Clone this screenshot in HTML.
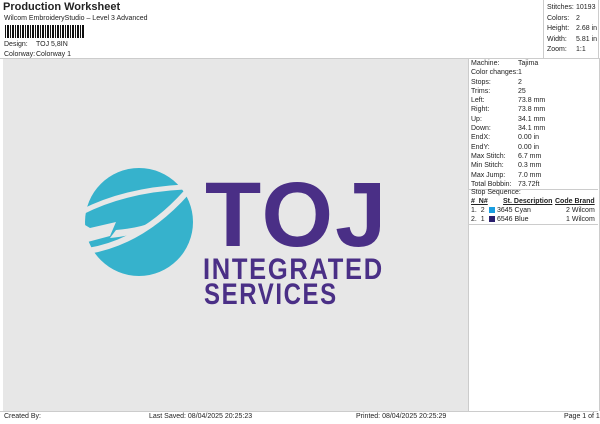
<html><head><style>
body{margin:0;width:600px;height:424px;background:#fff;font-family:"Liberation Sans",sans-serif;position:relative;overflow:hidden;color:#222}
.a{position:absolute;white-space:nowrap}
.s{font-size:7px}
</style></head><body>
<div class="a" style="left:3px;top:1px;font-size:11px;font-weight:bold">Production Worksheet</div>
<div class="a s" style="left:4px;top:15px">Wilcom EmbroideryStudio – Level 3 Advanced</div>
<div class="a" style="left:5px;top:25px;width:80px;height:13px;background:repeating-linear-gradient(90deg,#111 0 1px,#fff 1px 2px,#111 2px 4px,#fff 4px 5px)"></div>
<div class="a s" style="left:4px;top:41px">Design:</div><div class="a s" style="left:36px;top:41px">TOJ 5,8IN</div>
<div class="a s" style="left:4px;top:51px">Colorway:</div><div class="a s" style="left:36px;top:51px">Colorway 1</div>
<div class="a" style="left:0;top:0;width:598px;height:58px;border:1px solid #ccc;border-left:none;border-top:none"></div>
<div class="a" style="left:543px;top:0;width:56px;height:58px;border-left:1px solid #ccc"></div>
<div class="a s" style="left:547px;top:3px;line-height:10.5px">Stitches:<br>Colors:<br>Height:<br>Width:<br>Zoom:</div>
<div class="a s" style="left:576px;top:3px;line-height:10.5px">10193<br>2<br>2.68 in<br>5.81 in<br>1:1</div>
<div class="a" style="left:3px;top:59px;width:465px;height:352px;background:#e7e7e7"></div>
<div class="a" style="left:468px;top:58px;width:130px;height:353px;border-left:1px solid #ccc;border-right:1px solid #ccc"></div>
<div class="a s" style="left:471px;top:59px;line-height:9.3px">Machine:<br>Color changes:<br>Stops:<br>Trims:<br>Left:<br>Right:<br>Up:<br>Down:<br>EndX:<br>EndY:<br>Max Stitch:<br>Min Stitch:<br>Max Jump:<br>Total Bobbin:</div>
<div class="a s" style="left:518px;top:59px;line-height:9.3px">Tajima<br>1<br>2<br>25<br>73.8 mm<br>73.8 mm<br>34.1 mm<br>34.1 mm<br>0.00 in<br>0.00 in<br>6.7 mm<br>0.3 mm<br>7.0 mm<br>73.72ft</div>
<div class="a" style="left:469px;top:189px;width:129px;border-top:1px solid #ccc"></div>
<div class="a s" style="left:471px;top:189px">Stop Sequence:</div>
<div class="a s" style="left:471px;top:198px;font-weight:bold;text-decoration:underline">#&nbsp; N#</div>
<div class="a s" style="left:503px;top:198px;font-weight:bold;text-decoration:underline">St. Description</div>
<div class="a s" style="left:555px;top:198px;font-weight:bold;text-decoration:underline">Code Brand</div>
<div class="a s" style="left:471px;top:206px;line-height:9px">1.&nbsp; 2<br>2.&nbsp; 1</div>
<div class="a" style="left:489px;top:207px;width:6px;height:6px;background:#1a9ee0"></div>
<div class="a" style="left:489px;top:216px;width:6px;height:6px;background:#2a1f6e"></div>
<div class="a s" style="left:497px;top:206px;line-height:9px">3645 Cyan<br>6546 Blue</div>
<div class="a s" style="left:566px;top:206px;line-height:9px">2 Wilcom<br>1 Wilcom</div>
<div class="a" style="left:469px;top:224px;width:129px;border-top:1px solid #ccc"></div>
<div class="a" style="left:0;top:411px;width:598px;border-top:1px solid #ccc"></div>
<div class="a s" style="left:4px;top:413px">Created By:</div>
<div class="a s" style="left:149px;top:413px">Last Saved: 08/04/2025 20:25:23</div>
<div class="a s" style="left:356px;top:413px">Printed: 08/04/2025 20:25:29</div>
<div class="a s" style="left:564px;top:413px">Page 1 of 1</div>
<svg class="a" style="left:80px;top:160px" width="120" height="125" viewBox="0 0 120 125">
<circle cx="59" cy="62" r="54" fill="#36b2cc"/>
<path d="M2 52 Q45 30 104 27" stroke="#e7e7e7" stroke-width="5" fill="none"/>
<path d="M8 91 Q62 82 106 33" stroke="#e7e7e7" stroke-width="6" fill="none"/>
<path d="M0 62 L10 68 L36 62 L30 76 L0 84 Z" fill="#e7e7e7"/>
<path d="M36 70 Q60 68 72 62 L74 66 Q60 75 30 78 Z" fill="#e7e7e7"/>
</svg>
<div class="a" style="left:205px;top:163px;font-size:92px;font-weight:bold;color:#4a2f86;line-height:104px;letter-spacing:2px">TOJ</div>
<div class="a" style="left:203px;top:254px;font-size:30px;font-weight:bold;color:#4a2f86;letter-spacing:2px;line-height:32px;transform:scaleX(0.85);transform-origin:left">INTEGRATED</div>
<div class="a" style="left:204px;top:279px;font-size:30px;font-weight:bold;color:#4a2f86;letter-spacing:2px;line-height:32px;transform:scaleX(0.8);transform-origin:left">SERVICES</div>
</body></html>
